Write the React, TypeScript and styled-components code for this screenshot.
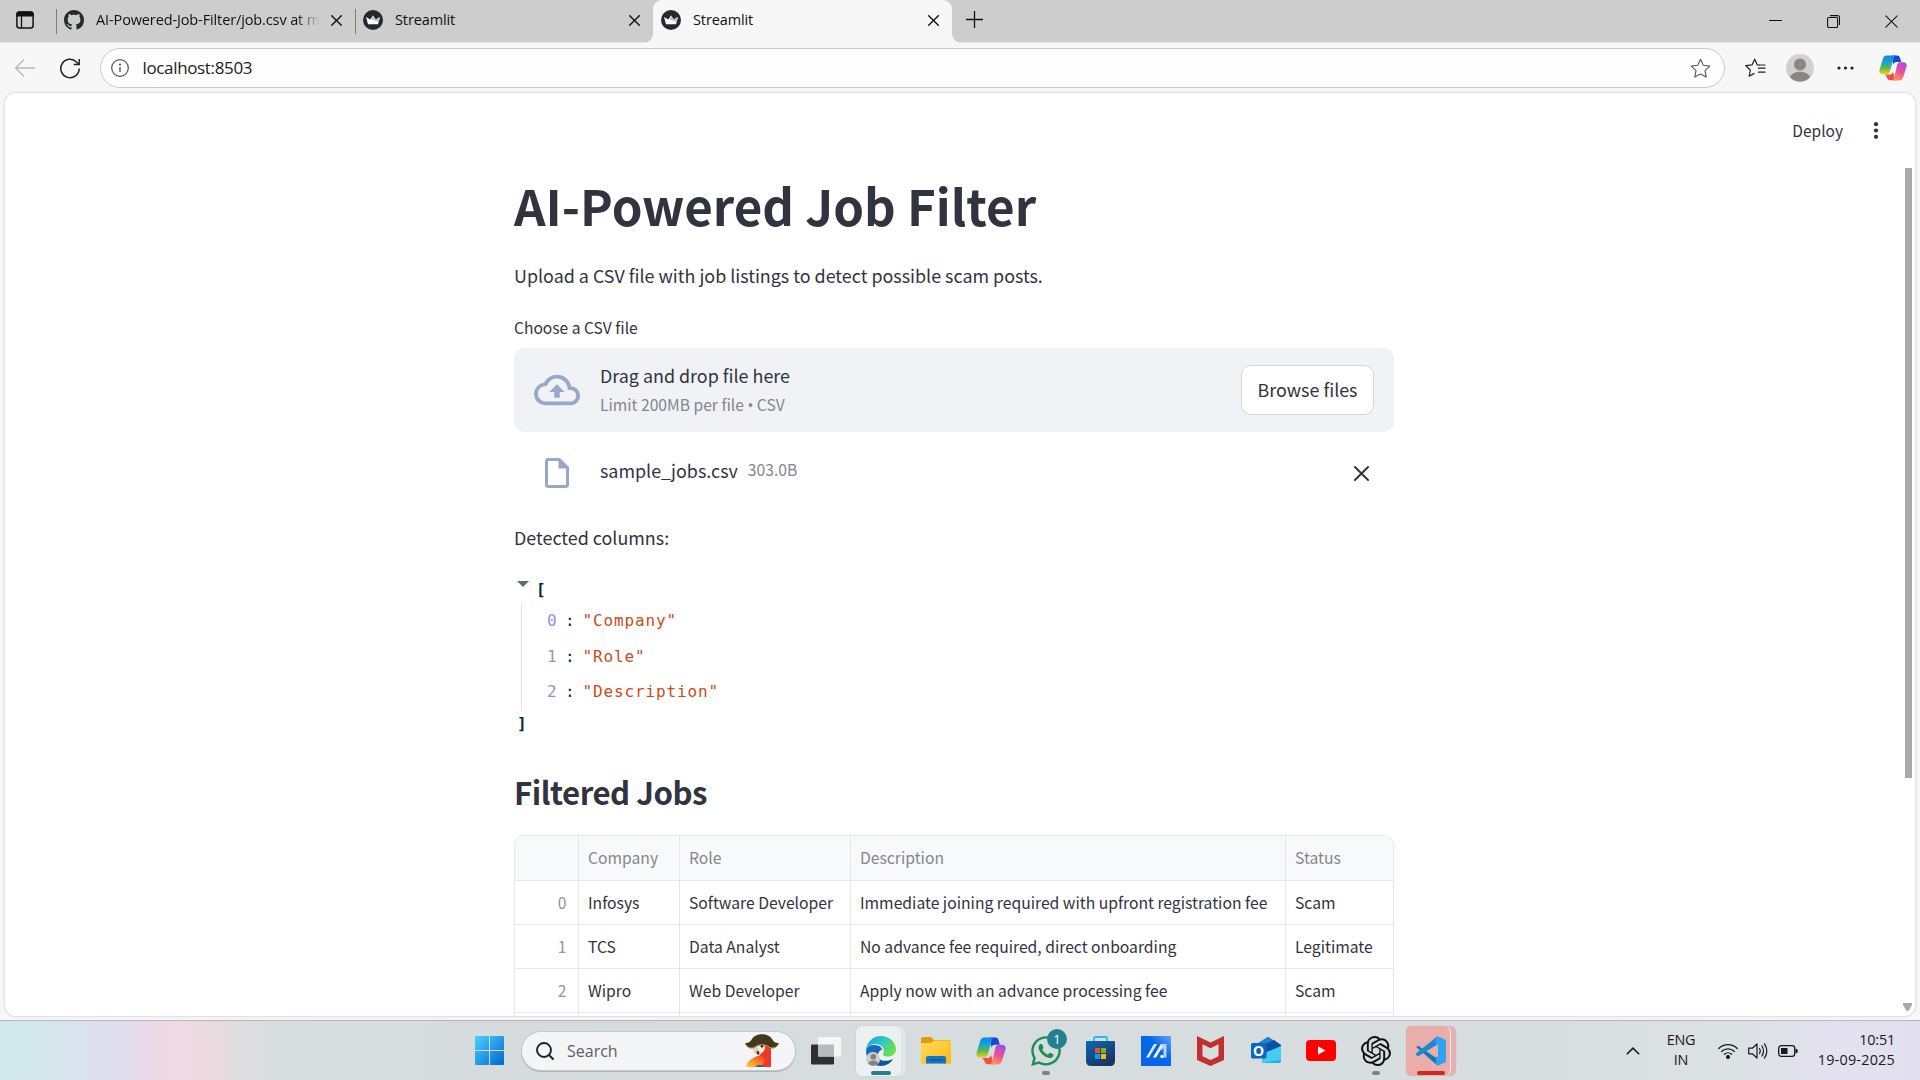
import React from "react";
import styled, { createGlobalStyle } from "styled-components";
import { MdOutlineCloudUpload, MdOutlineInsertDriveFile } from "react-icons/md";
import { FaWhatsapp } from "react-icons/fa";
import { SiOpenai } from "react-icons/si";

const ui = `"Open Sans", "Noto Sans", sans-serif`;
const source = `"Noto Sans CJK SC", "Open Sans", sans-serif`;
const mono = `"DejaVu Sans Mono", monospace`;
const ink = "#31333f";

const Global = createGlobalStyle`
  * { box-sizing: border-box; }
  body { margin: 0; overflow: hidden; background: #f7f7f7; }
  svg { display: block; flex: none; }
`;

const Screen = styled.div`
  width: 1920px;
  height: 1080px;
  display: flex;
  flex-direction: column;
  overflow: hidden;
  font-family: ${ui};
`;

/* ---------- browser chrome ---------- */
const TabStrip = styled.div`
  height: 42px;
  flex: none;
  display: flex;
  background: #cdcdcd;
`;
const PanelButton = styled.div`
  width: 56px;
  padding: 11px 0 0 16px;
`;
const Tab = styled.div<{ $active?: boolean; $width: number }>`
  position: relative;
  width: ${(p) => p.$width}px;
  height: ${(p) => (p.$active ? 43 : 42)}px;
  display: flex;
  align-items: flex-start;
  padding: 10px 13px 0 8px;
  gap: 12px;
  color: #111;
  background: ${(p) => (p.$active ? "#f7f7f7" : "transparent")};
  border-radius: ${(p) => (p.$active ? "9px 9px 0 0" : "0")};
  &::before {
    content: "";
    display: ${(p) => (p.$active ? "none" : "block")};
    position: absolute;
    left: 0;
    top: 9px;
    width: 1px;
    height: 25px;
    background: #7d7d7d;
  }
`;
const TabCorner = styled.i<{ $side: "left" | "right" }>`
  position: absolute;
  bottom: 0;
  ${(p) => p.$side}: -9px;
  width: 9px;
  height: 9px;
  background: radial-gradient(circle at ${(p) => p.$side} top, transparent 8.5px, #f7f7f7 9px);
`;
const TabTitle = styled.span<{ $fade?: boolean }>`
  flex: 1;
  min-width: 0;
  overflow: hidden;
  white-space: nowrap;
  font-size: 14.5px;
  line-height: 20px;
  letter-spacing: -0.12px;
  ${(p) => p.$fade && "mask-image: linear-gradient(90deg, #000 200px, transparent 224px);"}
`;
const TabClose = styled.span`
  padding-top: 5px;
`;
const NewTab = styled.div`
  padding: 11px 0 0 14px;
`;
const WindowControls = styled.div`
  margin-left: auto;
  display: flex;
  gap: 45px;
  padding: 15px 22px 0 0;
`;

const Toolbar = styled.div`
  height: 51px;
  flex: none;
  display: flex;
  align-items: center;
  padding: 0 13px 0 14px;
  background: #f7f7f7;
  border-top: 1px solid #e4e4e4;
`;
const NavIcons = styled.div`
  width: 86px;
  display: flex;
  gap: 24px;
`;
const AddressBar = styled.div`
  width: 1625px;
  height: 40px;
  display: flex;
  align-items: center;
  padding: 0 13px 0 10px;
  gap: 13.5px;
  border: 1px solid #cbcbcb;
  border-radius: 20px;
  background: #fdfdfd;
`;
const Url = styled.span`
  flex: 1;
  font-size: 17px;
  line-height: 24px;
  letter-spacing: -0.35px;
  padding-bottom: 1px;
  color: #222;
`;
const ToolbarActions = styled.div`
  flex: 1;
  display: flex;
  align-items: center;
  gap: 20px;
  padding-left: 20px;
`;
const MoreButton = styled.span`
  margin: 0 5px 0 3px;
`;

/* ---------- page ---------- */
const FrameArea = styled.div`
  flex: none;
  height: 927px;
  padding: 0 5px 4px;
  background: #f7f7f7;
`;
const Page = styled.div`
  height: 100%;
  display: flex;
  flex-direction: column;
  overflow: hidden;
  background: #fff;
  border-radius: 11px;
  box-shadow: 0 0 2px 1px #dcdcdc;
`;
const AppHeader = styled.header`
  height: 75px;
  flex: none;
  display: flex;
  align-items: center;
  justify-content: flex-end;
  gap: 27px;
  padding-right: 33px;
  font: 15.5px/24px ${source};
  color: ${ink};
`;
const DeployLabel = styled.span`
  padding-bottom: 2px;
`;
const Scroller = styled.div`
  flex: 1;
  min-height: 0;
  display: flex;
  justify-content: space-between;
  padding-left: 509px;
`;
const Main = styled.main`
  width: 880px;
  height: 848px;
  display: flex;
  flex-direction: column;
  overflow: hidden;
  font-family: ${source};
  color: ${ink};
  & > * { flex: none; }
`;
const ScrollTrack = styled.div`
  width: 12px;
  display: flex;
  flex-direction: column;
  justify-content: space-between;
  padding: 0 3px 5px 0;
`;
const ScrollThumb = styled.div`
  width: 7px;
  height: 610px;
  margin-left: 2px;
  background: #a9a9ad;
`;
const Title = styled.h1`
  margin: 4px 0 22px;
  font-size: 49.25px;
  line-height: 66px;
  font-weight: 700;
`;
const Paragraph = styled.p`
  margin: 0;
  font-size: 17.9px;
  line-height: 30px;
`;
const FieldLabel = styled.label`
  margin: 24px 0 8px;
  font-size: 15.6px;
  line-height: 26px;
`;
const Dropzone = styled.div`
  height: 84px;
  display: flex;
  align-items: center;
  padding: 0 20px;
  border-radius: 10px;
  background: #f0f2f6;
`;
const IconCell = styled.span<{ $width: number; $indent?: number }>`
  width: ${(p) => p.$width}px;
  margin-left: ${(p) => p.$indent ?? 0}px;
  color: #99a8c8;
`;
const DropText = styled.div`
  flex: 1;
  display: flex;
  flex-direction: column;
  font-size: 17.9px;
  line-height: 30px;
`;
const Small = styled.small`
  font-size: 15.65px;
  line-height: 30px;
  color: #84868e;
`;
const Dot = styled.span`
  font-family: ${ui};
`;
const BrowseButton = styled.button`
  width: 133px;
  height: 50px;
  padding: 0 0 2px;
  border: 1px solid #d5d6da;
  border-radius: 10px;
  background: #fff;
  color: ${ink};
  font: 17.9px/30px ${source};
`;
const FileRow = styled.div`
  height: 42px;
  margin: 20px 0 28px;
  display: flex;
  align-items: center;
  padding: 0 25px 0 27px;
`;
const FileName = styled.div`
  flex: 1;
  display: flex;
  gap: 10px;
  font-size: 17.9px;
  line-height: 30px;
  padding-bottom: 6px;
`;
const Json = styled.div`
  margin: 22px 0 34px;
  display: flex;
  flex-direction: column;
  font-family: ${mono};
  font-size: 16px;
  letter-spacing: 0.87px;
  color: #002b36;
`;
const JsonOpen = styled.div`
  display: flex;
  gap: 7px;
  padding-left: 3px;
  height: 29px;
  line-height: 31px;
  font-weight: 700;
`;
const JsonList = styled.div`
  margin-left: 7px;
  border-left: 1px solid #e5e5e6;
  padding-left: 25px;
  height: 107px;
`;
const JsonItem = styled.div`
  display: flex;
  height: 35.6px;
  line-height: 35px;
  white-space: pre;
`;
const JsonIndex = styled.span`
  color: #8f92d6;
  width: 18px;
`;
const JsonValue = styled.span`
  color: #cb4b16;
  margin-left: 7px;
`;
const JsonClose = styled.div`
  height: 27px;
  line-height: 27px;
  padding-left: 3px;
  font-weight: 700;
`;
const Subtitle = styled.h2`
  margin: 0 0 22px;
  font-size: 31.2px;
  line-height: 42px;
  font-weight: 600;
  letter-spacing: -0.5px;
`;
const Table = styled.div`
  width: 880px;
  border: 1px solid #e6e7ea;
  border-radius: 10px 10px 0 0;
  overflow: hidden;
`;
const Row = styled.div<{ $head?: boolean }>`
  display: grid;
  grid-template-columns: 63.5px 101px 171px 435px 1fr;
  height: ${(p) => (p.$head ? 45 : 43.8)}px;
  background: ${(p) => (p.$head ? "#f8f9fb" : "#fff")};
  color: ${(p) => (p.$head ? "#84868e" : ink)};
`;
const Cell = styled.div<{ $index?: boolean }>`
  border-right: 1px solid #e6e7ea;
  border-bottom: 1px solid #e6e7ea;
  padding: 0 11px 0 9.5px;
  line-height: 43px;
  font-size: 15.7px;
  white-space: nowrap;
  text-align: ${(p) => (p.$index ? "right" : "left")};
  ${(p) => p.$index && "color: #93959c;"}
  &:last-child { border-right: 0; }
`;

/* ---------- taskbar ---------- */
const Taskbar = styled.footer`
  flex: none;
  height: 60px;
  display: flex;
  align-items: center;
  padding-left: 475px;
  border-top: 1px solid #b4b6b9;
  background: linear-gradient(90deg, #d2e8ed 0, #d3e7ec 45px, #d9e3ed 75px, #dfddec 115px, #ebd9e8 150px, #f0dae3 178px, #ead9de 212px, #dddddf 245px, #d8dddf 280px, #d6dbdd 480px, #d8dee0 1550px, #dce1e4 1740px, #e4e1f0 1830px, #e2e0ee 1920px);
`;
const SearchBox = styled.div`
  width: 273px;
  height: 38px;
  margin: 0 3px 0 18px;
  display: flex;
  align-items: center;
  padding: 0 16px 0 14px;
  border-radius: 19px;
  background: #f3f5f6;
  box-shadow: 0 0 0 1px #c4cacc, 0 1px 0 1px #b0b5b8;
  color: #5c5e60;
  font-size: 16px;
`;
const SearchText = styled.span`
  flex: 1;
  padding-left: 13px;
`;
const Slot = styled.div<{ $tone?: "light" | "red" }>`
  position: relative;
  width: 55px;
  height: 50px;
  display: flex;
  align-items: center;
  justify-content: center;
  &::before, &::after {
    content: "";
    display: ${(p) => (p.$tone ? "block" : "none")};
    position: absolute;
    top: 0;
    bottom: 0;
    left: 2.5px;
    border-radius: 6px;
    background: ${(p) => (p.$tone === "red" ? "#e7b0af" : "#e1e6e8")};
    box-shadow: 0 0 1px #b9bec0;
    width: 50px;
  }
  &::after {
    width: 44px;
    background: ${(p) => (p.$tone === "red" ? "#e9adab" : "#ecf0f1")};
    border-right: 1px solid #f5eeee;
  }
  & > svg { position: relative; z-index: 1; }
`;
const RunMark = styled.i<{ $width: number; $color: string }>`
  position: absolute;
  z-index: 2;
  bottom: 1px;
  left: calc(50% - ${(p) => p.$width / 2}px);
  width: ${(p) => p.$width}px;
  height: 4px;
  border-radius: 2px;
  background: ${(p) => p.$color};
`;
const Badge = styled.b`
  position: absolute;
  z-index: 2;
  left: 29px;
  top: 3px;
  width: 20px;
  height: 20px;
  border-radius: 50%;
  background: #23808f;
  color: #fff;
  font-size: 13px;
  line-height: 20px;
  font-weight: 400;
  text-align: center;
`;
const Tray = styled.div`
  margin-left: auto;
  display: flex;
  align-items: center;
  padding-right: 25px;
  color: #191919;
  font-size: 14.4px;
  line-height: 20px;
  letter-spacing: -0.2px;
`;
const Language = styled.div`
  width: 40px;
  margin: 0 17px 0 21px;
  padding-bottom: 2px;
  text-align: center;
`;
const StatusIcons = styled.div`
  display: flex;
  gap: 10px;
  align-items: center;
`;
const Clock = styled.div`
  width: 97px;
  padding-bottom: 2px;
  text-align: right;
`;
const DateText = styled.span`
  letter-spacing: 0.22px;
`;

/* ---------- drawings ---------- */
const Cross = ({ size = 11, width = 1.4, color = "#111" }) => (
  <svg width={size} height={size} viewBox="0 0 11 11" stroke={color} strokeWidth={width} strokeLinecap="round">
    <path d="M.7.7l9.6 9.6M10.3.7L.7 10.3" />
  </svg>
);

const GithubMark = () => (
  <svg width="20" height="20" viewBox="0 0 16 16" fill="#24292f">
    <path d="M8 0C3.58 0 0 3.58 0 8c0 3.54 2.29 6.53 5.47 7.59.4.07.55-.17.55-.38 0-.19-.01-.82-.01-1.49-2.01.37-2.53-.49-2.69-.94-.09-.23-.48-.94-.82-1.13-.28-.15-.68-.52-.01-.53.63-.01 1.08.58 1.23.82.72 1.21 1.87.87 2.33.66.07-.52.28-.87.51-1.07-1.78-.2-3.64-.89-3.64-3.95 0-.87.31-1.59.82-2.15-.08-.2-.36-1.02.08-2.12 0 0 .67-.21 2.2.82.64-.18 1.32-.27 2-.27.68 0 1.36.09 2 .27 1.53-1.04 2.2-.82 2.2-.82.44 1.1.16 1.92.08 2.12.51.56.82 1.27.82 2.15 0 3.07-1.87 3.75-3.65 3.95.29.25.54.73.54 1.48 0 1.07-.01 1.93-.01 2.2 0 .21.15.46.55.38A8.01 8.01 0 0 0 16 8c0-4.42-3.58-8-8-8z" />
  </svg>
);

const StreamlitIcon = () => (
  <svg width="20" height="20" viewBox="0 0 20 20">
    <circle cx="10" cy="10" r="10" fill="#262730" />
    <path d="M3 7l4.3 2.5L10 5.5l2.7 4L17 7l-2 7.2H5z" fill="#fff" />
    <path d="M10 5.5l2.7 4L17 7l-1.4 5L8.6 9.6z" fill="#c3c4c8" />
  </svg>
);

const Copilot = ({ size, id }: { size: number; id: string }) => (
  <svg width={size} height={size} viewBox="0 0 30 30">
    <defs>
      <linearGradient id={`${id}a`} x1="0" y1="0" x2="0" y2="1">
        <stop offset=".05" stopColor="#1583ee" /><stop offset=".4" stopColor="#18a9c9" />
        <stop offset=".65" stopColor="#56b84d" /><stop offset="1" stopColor="#f5cf13" />
      </linearGradient>
      <linearGradient id={`${id}b`} x1=".7" y1="0" x2=".3" y2="1">
        <stop offset="0" stopColor="#a34bea" /><stop offset=".5" stopColor="#ee5093" /><stop offset="1" stopColor="#ff9a55" />
      </linearGradient>
    </defs>
    <path d="M14 1.5h5.500c2 0 2.600 1.200 3.200 3.200l1.200 4h-5c-2 0-2.800.8-3.500 3z" fill="#1749cf" />
    <path d="M6.500 22h5c2 0 2.900-1 3.500-3l1.500 5c.8 2.600 1.500 4.200 3.500 4.200h-8c-2.300 0-3-1.300-3.600-3.200z" fill="#ef5148" />
    <path d="M8.500 1.500h10c-1.800.3-2.500 2-3 3.700l-3.700 13c-.7 2.500-1.700 3.400-4 3.400H4c-3 0-4.200-2.300-3.400-5L4 5.500c.8-2.700 2-4 4.500-4z" fill={`url(#${id}a)`} />
    <path d="M21.500 28.500h-8c1.800-.3 2.500-2 3-3.700l2.700-12.600c.7-2.500 1.700-3.400 4-3.400H26c3 0 4.200 2.300 3.400 5L26 24.500c-.8 2.700-2 4-4.500 4z" fill={`url(#${id}b)`} />
  </svg>
);

const starPath = "M10 1.200l2.650 5.700 6.200.8-4.550 4.300 1.150 6.200L10 15.200l-5.450 3 1.150-6.200L1.150 7.700l6.200-.8z";

const Parrot = () => (
  <svg width="34" height="33" viewBox="0 0 34 33">
    <defs>
      <linearGradient id="wing" x1="0" y1="1" x2=".8" y2="0">
        <stop offset="0" stopColor="#ffd32b" /><stop offset=".5" stopColor="#ff8a22" /><stop offset="1" stopColor="#f2442b" />
      </linearGradient>
    </defs>
    <path d="M12 10c3-3 14-3 14 5v18H8c-2-8 6-9 6-14z" fill="#ea3929" />
    <path d="M1 33c1-6 8-11 16-12 5 4 1 11-3 12z" fill="url(#wing)" />
    <path d="M10 33c3-3 6-3 9 0z" fill="#3460a8" />
    <path d="M11 11c4-2 10-2 9 3-.5 4-4 5-6 8-4-1-6-7-3-11z" fill="#f5ead8" />
    <path d="M9 13c4-1 7 3 4 8-4-1-6-5-4-8z" fill="#ddd0bd" />
    <path d="M12 17c2 0 3 1 2 4-2-.5-3-2-2-4z" fill="#333" />
    <circle cx="17" cy="12" r="1.500" fill="#222" />
    <path d="M0 9c4 0 5-1 7-4 3-6.500 17-6.500 20 0 2 3 3 4 7 4-1 4-5 6-9 5-5-4-11-4-16 0-4 1-8-1-9-5z" fill="#43371f" />
    <path d="M.3 9.300c1 4 5 5.500 8.700 4.400 5-4 11-4 16 0 4 1 7.500-1 8.700-4.400" fill="none" stroke="#c9a243" strokeWidth="1" />
  </svg>
);

const WindowsLogo = () => (
  <svg width="29" height="29" viewBox="0 0 29 29">
    <defs>
      <linearGradient id="win" x1="0" y1="0" x2="1" y2="1">
        <stop offset="0" stopColor="#4cd0fd" /><stop offset="1" stopColor="#0068cf" />
      </linearGradient>
    </defs>
    <path d="M1 0h13v14H0V1a1 1 0 011-1zM15 0h13a1 1 0 011 1v13H15zM0 15h14v14H1a1 1 0 01-1-1zM15 15h14v13a1 1 0 01-1 1H15z" fill="url(#win)" />
  </svg>
);

const TaskView = () => (
  <svg width="30" height="28" viewBox="0 0 30 28">
    <rect y="7.500" width="23" height="20" rx="1.200" fill="#2e2f2f" />
    <rect x="7" y="0" width="23" height="19.500" rx="1" fill="#f6f6f6" />
    <path d="M7 7.500h16v12H7z" fill="#b9babb" />
  </svg>
);

const Edge = () => (
  <svg width="30" height="30" viewBox="0 0 30 30">
    <defs>
      <linearGradient id="edgeTop" x1="0" y1="0" x2="1" y2=".5">
        <stop offset="0" stopColor="#1d9ee0" /><stop offset=".5" stopColor="#2cc3cf" /><stop offset="1" stopColor="#6be04f" />
      </linearGradient>
      <linearGradient id="edgeLow" x1="0" y1="0" x2="1" y2="1">
        <stop offset="0" stopColor="#1478d0" /><stop offset="1" stopColor="#114a8c" />
      </linearGradient>
    </defs>
    <path d="M0 15C0 10 5 8.500 9 9c5 .3 7 3 7 5-2 0-4 2-4 5 0 5 6 8 15 4-2 4-7 7-12 7C7 30 0 24 0 15z" fill="url(#edgeLow)" />
    <path d="M0 14C1 6 7 0 15 0c9 0 15 7 15 13 0 5-4 7.500-8 7.500-4 0-5-1.500-5-2.500 0-.8 1-1.300 1-3C18 11 14 8 9 8 4 8 1 11 0 14z" fill="url(#edgeTop)" />
    <circle cx="7" cy="23" r="7" fill="#d1cfcd" />
    <circle cx="7.300" cy="20.800" r="2.900" fill="#85817e" />
    <path d="M2.200 27.500c1-4 9-4 10 0-3 3-7 3-10 0z" fill="#85817e" />
  </svg>
);

const Folder = () => (
  <svg width="30" height="27" viewBox="0 0 30 27">
    <defs><linearGradient id="fold" x1="0" y1="0" x2="1" y2="1"><stop stopColor="#ffdc5f" /><stop offset="1" stopColor="#fcb813" /></linearGradient></defs>
    <path d="M0 2Q0 0 2 0h8l3 3h15q2 0 2 2v5H0z" fill="#e09c0a" />
    <path d="M0 7q0-1 1-1h9l3-2.500h16q1 0 1 1V26q0 .8-1 .8H1q-1 0-1-.8z" fill="url(#fold)" />
    <path d="M5 26.500V21q0-2 2-2h16q2 0 2 2v5.500z" fill="#0f76c9" />
    <path d="M9 23h12" stroke="#0a4f94" strokeWidth="1.200" strokeLinecap="round" />
  </svg>
);

const Store = () => (
  <svg width="29" height="30" viewBox="0 0 29 30">
    <defs><linearGradient id="store" x1="0" y1="0" x2=".6" y2="1"><stop stopColor="#0d67b6" /><stop offset="1" stopColor="#1b3363" /></linearGradient></defs>
    <path d="M8 8V2.500Q8 1 9.500 1h10Q21 1 21 2.500V8" fill="none" stroke="#27b8ee" strokeWidth="1.800" />
    <path d="M0 6q0-1 1-1h27q1 0 1 1v19q0 5-5 5H5q-5 0-5-5z" fill="url(#store)" />
    <path d="M9 12h5v5H9z" fill="#f25022" /><path d="M15 12h5v5h-5z" fill="#7fba00" />
    <path d="M9 18h5v5H9z" fill="#00a4ef" /><path d="M15 18h5v5h-5z" fill="#ffb900" />
  </svg>
);

const MyAsus = () => (
  <svg width="30" height="30" viewBox="0 0 30 30">
    <defs><linearGradient id="asus" x1="0" y1="1" x2="1" y2="0"><stop stopColor="#0462e6" /><stop offset=".6" stopColor="#0968e8" /><stop offset="1" stopColor="#67a4f3" /></linearGradient></defs>
    <path d="M0 0h30v30H0z" fill="url(#asus)" />
    <path d="M5 21.500L13 8h3L8 21.500z" fill="#dce9fc" />
    <path d="M12 21.500L20 8h3l-8 13.500z" fill="#fff" />
    <path d="M21 8h4.500v13.500h-3V12L20 15z" fill="#b8d2fa" />
    <circle cx="21" cy="20.500" r="1.700" fill="#fff" />
  </svg>
);

const McAfee = () => (
  <svg width="27" height="30" viewBox="0 0 27 30">
    <path d="M0 0l13.500 6.500L27 0v24l-13.500 6L0 24z" fill="#c1302f" />
    <path d="M5.500 8.300l8 4 8-4v12l-8 3.700-8-3.700z" fill="#d8dee0" />
  </svg>
);

const OutlookO = styled.text`
  font: 700 14px ${ui};
  fill: #fff;
`;
const Outlook = () => (
  <svg width="30" height="27" viewBox="0 0 30 27">
    <path d="M4 8L16 .3q1-.6 2 0L30 8v4L17 18 4 12z" fill="#1b82d8" />
    <path d="M10 9l13-6 7 5v4L17 18z" fill="#0b4fa3" />
    <path d="M11 17l19-8v14q0 3-3 3H11z" fill="#43cdf3" />
    <path d="M11 26l19-3q0 3-3 3z" fill="#23a9e6" />
    <rect y="6" width="15.500" height="15.500" rx="1.500" fill="#0f65bd" />
    <OutlookO x="2" y="18.800">O</OutlookO>
  </svg>
);

const YouTube = () => (
  <svg width="30" height="21" viewBox="0 0 30 21">
    <rect width="30" height="21" rx="4" fill="#fe0000" />
    <path d="M12 6.200l7.500 4.300-7.500 4.300z" fill="#fff" />
  </svg>
);

const VsCode = () => (
  <svg width="30" height="30" viewBox="0 0 30 30">
    <path d="M.2 11L2.200 9.800 22.500 23.500l-1 6z" fill="#1178b8" />
    <path d="M21.500.3L.2 17.300V19l2 1.300L23 7.500z" fill="#168bd0" />
    <path d="M21.500.3L29 3.500q1 .5 1 1.500v20q0 1-1 1.500l-7.500 3.200L20 28.500V2z" fill="#2fa4ee" />
    <path d="M22 8.500v13L13.500 15z" fill="#e9adab" />
  </svg>
);

const columns = ["Company", "Role", "Description"];
const jobs = [
  ["0", "Infosys", "Software Developer", "Immediate joining required with upfront registration fee", "Scam"],
  ["1", "TCS", "Data Analyst", "No advance fee required, direct onboarding", "Legitimate"],
  ["2", "Wipro", "Web Developer", "Apply now with an advance processing fee", "Scam"],
  ["", "", "", "", ""],
];

const App = () => (
  <Screen>
    <Global />
    <TabStrip>
      <PanelButton>
        <svg width="18" height="18" viewBox="0 0 18 18">
          <rect x=".9" y=".9" width="16.200" height="16.200" rx="2.500" fill="none" stroke="#111" strokeWidth="1.500" />
          <path d="M.5 3Q.5.5 3 .5h12q2.500 0 2.500 2.500v2.500H.5z" fill="#111" />
          <path d="M5.500 5v12" stroke="#111" strokeWidth="1.300" />
        </svg>
      </PanelButton>
      <Tab $width={299}>
        <GithubMark />
        <TabTitle $fade>AI-Powered-Job-Filter/job.csv at main</TabTitle>
        <TabClose><Cross /></TabClose>
      </Tab>
      <Tab $width={298}>
        <StreamlitIcon />
        <TabTitle>Streamlit</TabTitle>
        <TabClose><Cross /></TabClose>
      </Tab>
      <Tab $width={299} $active>
        <TabCorner $side="left" />
        <StreamlitIcon />
        <TabTitle>Streamlit</TabTitle>
        <TabClose><Cross /></TabClose>
        <TabCorner $side="right" />
      </Tab>
      <NewTab>
        <svg width="17" height="17" viewBox="0 0 17 17" stroke="#111" strokeWidth="1.300"><path d="M8.500 0v17M0 8.500h17" /></svg>
      </NewTab>
      <WindowControls>
        <svg width="13" height="13" viewBox="0 0 13 13" stroke="#111"><path d="M0 5.500h13" /></svg>
        <svg width="13" height="13" viewBox="0 0 13 13" fill="none" stroke="#111" strokeWidth="1.100">
          <rect x=".6" y="2.500" width="10" height="10" rx="1.200" />
          <path d="M3 .6h7.500q2 0 2 2V10" />
        </svg>
        <Cross size={13} width={0.9} />
      </WindowControls>
    </TabStrip>

    <Toolbar>
      <NavIcons>
        <svg width="21" height="20" viewBox="0 0 21 20" fill="none" stroke="#b9b9b9" strokeWidth="1.300"><path d="M21 10H1.500M10 1.500L1.500 10l8.500 8.500" /></svg>
        <svg width="22" height="21" viewBox="0 0 22 21" fill="none" stroke="#222" strokeWidth="1.500">
          <path d="M20.200 10.500a9.200 9.200 0 11-2.500-6.300l2 2" /><path d="M20.200 1v5.500h-5.500" />
        </svg>
      </NavIcons>
      <AddressBar>
        <svg width="18" height="18" viewBox="0 0 18 18" fill="none" stroke="#555" strokeWidth="1.200">
          <circle cx="9" cy="9" r="8.300" /><path d="M9 8v5" strokeWidth="1.400" /><circle cx="9" cy="5.500" r=".5" fill="#555" />
        </svg>
        <Url>localhost:8503</Url>
        <svg width="21" height="21" viewBox="0 0 20 20" fill="none" stroke="#5c5c5c" strokeWidth="1.100" strokeLinejoin="round"><path d={starPath} /></svg>
      </AddressBar>
      <ToolbarActions>
        <svg width="21" height="20" viewBox="0 0 21 20" fill="none" stroke="#222" strokeWidth="1.200" strokeLinejoin="round">
          <path d="M14.500 7.200l-2.200-.3L9.700 1.200 7 6.900l-6.200.8L5.400 12l-1.200 6.200 5.200-2.800" />
          <path d="M13 10.200h7.500M13 14.200h7.500M14 7h6.500" />
        </svg>
        <svg width="28" height="28" viewBox="0 0 28 28">
          <circle cx="14" cy="14" r="14" fill="#d3d1ce" /><circle cx="14" cy="10.500" r="6" fill="#8a8683" />
          <path d="M4 23c3-7 17-7 20 0-5 6-15 6-20 0z" fill="#8a8683" />
        </svg>
        <MoreButton>
          <svg width="17" height="4" viewBox="0 0 17 4" fill="#222"><circle cx="2" cy="2" r="1.600" /><circle cx="8.500" cy="2" r="1.600" /><circle cx="15" cy="2" r="1.600" /></svg>
        </MoreButton>
        <Copilot size={28} id="nav" />
      </ToolbarActions>
    </Toolbar>

    <FrameArea>
      <Page>
        <AppHeader>
          <DeployLabel>Deploy</DeployLabel>
          <svg width="12" height="17" viewBox="0 0 12 17" fill={ink}><circle cx="6" cy="2.200" r="2.100" /><circle cx="6" cy="8.500" r="2.100" /><circle cx="6" cy="14.800" r="2.100" /></svg>
        </AppHeader>
        <Scroller>
          <Main>
            <Title>AI-Powered Job Filter</Title>
            <Paragraph>Upload a CSV file with job listings to detect possible scam posts.</Paragraph>
            <FieldLabel>Choose a CSV file</FieldLabel>
            <Dropzone>
              <IconCell $width={66}><MdOutlineCloudUpload size={46} /></IconCell>
              <DropText>
                <span>Drag and drop file here</span>
                <Small>Limit 200MB per file <Dot>•</Dot> CSV</Small>
              </DropText>
              <BrowseButton>Browse files</BrowseButton>
            </Dropzone>
            <FileRow>
              <IconCell $width={61} $indent={-2}><MdOutlineInsertDriveFile size={36} /></IconCell>
              <FileName>
                <span>sample_jobs.csv</span>
                <Small>303.0B</Small>
              </FileName>
              <Cross size={15} color={ink} />
            </FileRow>
            <Paragraph>Detected columns:</Paragraph>
            <Json>
              <JsonOpen>
                <svg width="12" height="14" viewBox="0 0 12 14"><path d="M0 7h12L6 13z" fill="#586e75" /></svg>
                <span>[</span>
              </JsonOpen>
              <JsonList>
                {columns.map((name, i) => (
                  <JsonItem key={name}>
                    <JsonIndex>{i}</JsonIndex>
                    <span>:</span>
                    <JsonValue>"{name}"</JsonValue>
                  </JsonItem>
                ))}
              </JsonList>
              <JsonClose>]</JsonClose>
            </Json>
            <Subtitle>Filtered Jobs</Subtitle>
            <Table>
              <Row $head>
                {["", "Company", "Role", "Description", "Status"].map((h) => <Cell key={h}>{h}</Cell>)}
              </Row>
              {jobs.map((job, r) => (
                <Row key={r}>
                  {job.map((value, c) => <Cell key={c} $index={c === 0}>{value}</Cell>)}
                </Row>
              ))}
            </Table>
          </Main>
          <ScrollTrack>
            <ScrollThumb />
            <svg width="9" height="8" viewBox="0 0 9 8"><path d="M0 0h9v2L5.500 8h-2L0 2z" fill="#a9a9ad" /></svg>
          </ScrollTrack>
        </Scroller>
      </Page>
    </FrameArea>

    <Taskbar>
      <WindowsLogo />
      <SearchBox>
        <svg width="18" height="18" viewBox="0 0 18 18" fill="none" stroke="#222" strokeWidth="1.900" strokeLinecap="round"><circle cx="8" cy="8" r="7" /><path d="M13 13l4 4" /></svg>
        <SearchText>Search</SearchText>
        <Parrot />
      </SearchBox>
      <Slot><TaskView /></Slot>
      <Slot $tone="light"><Edge /><RunMark $width={20} $color="#23808f" /></Slot>
      <Slot><Folder /></Slot>
      <Slot><Copilot size={30} id="dock" /></Slot>
      <Slot><FaWhatsapp size={34} color="#1d8f54" /><Badge>1</Badge><RunMark $width={8} $color="#7e8182" /></Slot>
      <Slot><Store /></Slot>
      <Slot><MyAsus /></Slot>
      <Slot><McAfee /></Slot>
      <Slot><Outlook /></Slot>
      <Slot><YouTube /></Slot>
      <Slot><SiOpenai size={30} color="#111" /><RunMark $width={8} $color="#7e8182" /></Slot>
      <Slot $tone="red"><VsCode /><RunMark $width={28} $color="#c92b21" /></Slot>
      <Tray>
        <svg width="14" height="8" viewBox="0 0 14 8" fill="none" stroke="#191919" strokeWidth="1.600"><path d="M.8 7.300L7 1.200l6.200 6.100" /></svg>
        <Language>ENG<br />IN</Language>
        <StatusIcons>
          <svg width="20" height="16" viewBox="0 0 20 16" fill="none" stroke="#191919" strokeWidth="1.300" strokeLinecap="round">
            <path d="M.8 5.500a13 13 0 0118.400 0M3.700 8.500a9 9 0 0112.600 0M6.500 11.300a5 5 0 017 0" /><circle cx="10" cy="14" r="1.400" fill="#191919" />
          </svg>
          <svg width="20" height="18" viewBox="0 0 20 18" fill="none" stroke="#191919" strokeWidth="1.200" strokeLinecap="round" strokeLinejoin="round">
            <path d="M.7 6.200h3.600L9 2v14l-4.700-4.200H.7zM11.500 6.500q1.500 2.500 0 5M14 4q3 5 0 10M16.500 1.800q4.700 7.200 0 14.400" />
          </svg>
          <svg width="20" height="12" viewBox="0 0 20 12"><rect x=".7" y=".7" width="16" height="10.600" rx="2.500" fill="none" stroke="#191919" strokeWidth="1.300" /><rect x="3" y="3" width="6.500" height="6" fill="#191919" /><path d="M17.500 3.500q2.500.5 2.500 2.500t-2.500 2.500z" fill="#191919" /></svg>
        </StatusIcons>
        <Clock>10:51<br /><DateText>19-09-2025</DateText></Clock>
      </Tray>
    </Taskbar>
  </Screen>
);

export default App;
